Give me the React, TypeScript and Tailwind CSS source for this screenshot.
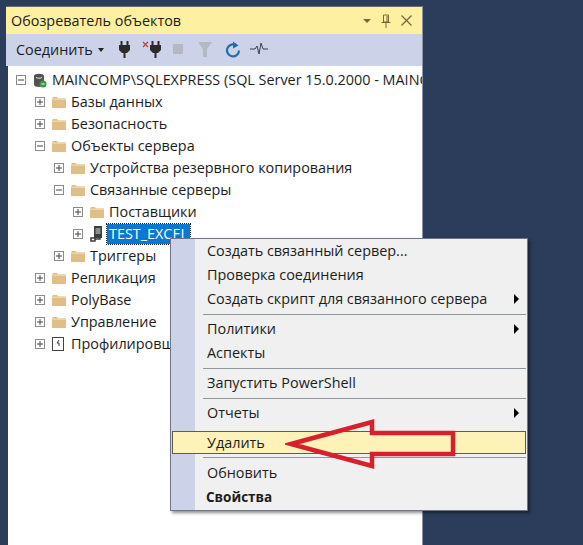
import React from 'react';

type Kind = 'server' | 'folder' | 'linked' | 'profiler';

interface TreeRow {
  level: number;
  open: boolean;
  kind: Kind;
  label: string;
  selected?: boolean;
}

const rows: TreeRow[] = [
  { level: 0, open: true, kind: 'server', label: 'MAINCOMP\\SQLEXPRESS (SQL Server 15.0.2000 - MAINCOMP\\User)' },
  { level: 1, open: false, kind: 'folder', label: 'Базы данных' },
  { level: 1, open: false, kind: 'folder', label: 'Безопасность' },
  { level: 1, open: true, kind: 'folder', label: 'Объекты сервера' },
  { level: 2, open: false, kind: 'folder', label: 'Устройства резервного копирования' },
  { level: 2, open: true, kind: 'folder', label: 'Связанные серверы' },
  { level: 3, open: false, kind: 'folder', label: 'Поставщики' },
  { level: 3, open: false, kind: 'linked', label: 'TEST_EXCEL', selected: true },
  { level: 2, open: false, kind: 'folder', label: 'Триггеры' },
  { level: 1, open: false, kind: 'folder', label: 'Репликация' },
  { level: 1, open: false, kind: 'folder', label: 'PolyBase' },
  { level: 1, open: false, kind: 'folder', label: 'Управление' },
  { level: 1, open: false, kind: 'profiler', label: 'Профилировщик XEvent' },
];

const indents = ['pl-2', 'pl-[27px]', 'pl-[46px]', 'pl-[65px]'];

const Expander: React.FC<{ open: boolean }> = ({ open }) => (
  <svg width="10" height="10" viewBox="0 0 10 10" className="shrink-0">
    <rect x="0.5" y="0.5" width="9" height="9" fill="#fff" stroke="#8a8a8a" />
    <path d={open ? 'M2 5h6' : 'M2 5h6M5 2v6'} stroke="#444" fill="none" />
  </svg>
);

const TreeIcon: React.FC<{ kind: Kind }> = ({ kind }) => {
  if (kind === 'server') {
    return (
      <svg width="14" height="15" viewBox="0 0 14 15" className="shrink-0">
        <path d="M1 3c0-3 10-3 10 0v9c0 2.500-10 2.500-10 0z" fill="#55514c" />
        <path d="M3 4.500c2 1 4 1 6 0" stroke="#e8e8e8" fill="none" />
        <circle cx="10" cy="11" r="3.500" fill="#2f9e44" />
        <path d="M8.500 11h3" stroke="#fff" />
      </svg>
    );
  }
  if (kind === 'linked') {
    return (
      <svg width="13" height="16" viewBox="0 0 13 16" className="shrink-0">
        <rect x="4" y="0" width="8" height="12" fill="#3d3d3d" />
        <path d="M5.500 3h5M5.500 5h5M5.500 7h5" stroke="#ddd" />
        <path d="M1 12h4v3H1zM5 13h5v-2" stroke="#3d3d3d" strokeWidth="1.500" fill="none" />
      </svg>
    );
  }
  if (kind === 'profiler') {
    return (
      <svg width="13" height="15" viewBox="0 0 13 15" className="shrink-0">
        <rect x="0.500" y="0.500" width="11" height="13" fill="#fff" stroke="#444" />
        <path d="M7 3L5 6l2 0v3" stroke="#333" fill="none" />
      </svg>
    );
  }
  return (
    <svg width="14" height="12" viewBox="0 0 14 12" className="shrink-0">
      <path d="M0 2.500L1 1h4l1 1.500h8V12H0z" fill="#dfbe87" />
      <path d="M0 2.500h14V4H0z" fill="#ecd5ab" />
    </svg>
  );
};

const Separator = () => <div className="ml-[32px] mr-px mt-[3px] mb-0.5 h-px bg-[#8f95a3]" />;

const MenuItem: React.FC<{ label: string; arrow?: boolean; bold?: boolean }> = ({ label, arrow, bold }) => (
  <div className={`flex items-center justify-between h-6 pl-[36px] pr-2 ${bold ? 'font-bold text-[13.5px] -ml-px' : ''}`}>
    <span>{label}</span>
    {arrow && <span className="border-y-[5px] border-l-[5px] border-y-transparent border-l-black" />}
  </div>
);

export default function App() {
  return (
    <div className="relative w-[583px] h-[545px] overflow-hidden bg-[#2c3d5b] pl-1.5 pt-1.5 font-['Open_Sans','Noto_Sans',sans-serif] text-[14.4px] text-[#1c1c1c]">
      <div className="flex flex-col w-[417px] h-[539px] border-r border-[#8d93ab]">
        {/* title */}
        <div className="flex items-center justify-between h-[28px] bg-[#fdf0a0] pl-[5px] pr-2.5 shrink-0 border-t border-[#6d6d6d]">
          <span>Обозреватель объектов</span>
          <div className="flex items-center gap-[10px]">
            <span className="border-x-[4px] border-t-[4px] border-x-transparent border-t-[#77683a]" />
            <svg width="10" height="14" viewBox="0 0 10 14">
              <path d="M2.500 1h5v7h-5zM0.500 8.500h9M5 8.500V14M6 2v6" stroke="#77683a" fill="none" />
            </svg>
            <svg width="11" height="11" viewBox="0 0 11 11">
              <path d="M0.500 0.500l10 10M10.500 0.500l-10 10" stroke="#77683a" strokeWidth="1.300" fill="none" />
            </svg>
          </div>
        </div>

        {/* toolbar */}
        <div className="flex items-center h-[32px] bg-[#ccd3e8] pl-2.5 shrink-0">
          <span>Соединить</span>
          <span className="ml-[5px] border-x-[3.5px] border-t-[4px] border-x-transparent border-t-[#222]" />
          <div className="flex items-center ml-[15px] -mt-0.5">
            <svg width="11" height="17" viewBox="0 0 11 17">
              <path d="M2.500 0v4M8.500 0v4" stroke="#2b2b2b" strokeWidth="2" />
              <path d="M0 4h11v5l-3 3H3L0 9zM4.500 12h2v5h-2z" fill="#2b2b2b" />
            </svg>
            <svg width="19" height="17" viewBox="0 0 19 17" className="ml-[12px]">
              <path d="M1 1l5 5M6 1L1 6" stroke="#d0392b" strokeWidth="1.200" />
              <path d="M10.500 0v4M16.500 0v4" stroke="#2b2b2b" strokeWidth="2" />
              <path d="M8 4h11v5l-3 3h-5L8 9zM12.500 12h2v5h-2z" fill="#2b2b2b" />
            </svg>
            <span className="ml-[12px] size-[10px] bg-[#b5b8c3]" />
            <svg width="14" height="15" viewBox="0 0 14 15" className="ml-[15px]">
              <path d="M0 0h14L9 7v8H5V7z" fill="#b5b8c3" />
            </svg>
            <svg width="16" height="17" viewBox="0 0 16 17" className="ml-[13px]">
              <path d="M11.500 4.500a6 6 0 1 0 2.500 5" stroke="#1f6fb0" strokeWidth="2.200" fill="none" />
              <path d="M8 0.500l5.500 4-5.500 3z" fill="#1f6fb0" />
            </svg>
            <svg width="18" height="12" viewBox="0 0 18 12" className="ml-[9px]">
              <path d="M0 6h5l2-3 2 8 2-11 2 6h5" stroke="#3a3f4a" fill="none" />
            </svg>
          </div>
        </div>

        {/* tree */}
        <div className="flex-1 bg-white ml-0.5 pt-[3px] overflow-hidden">
          {rows.map((row) => (
            <div key={row.label} className={`flex items-center h-[22px] whitespace-nowrap ${indents[row.level]}`}>
              <Expander open={row.open} />
              <span className="flex w-[14px] ml-[7px] shrink-0">
                <TreeIcon kind={row.kind} />
              </span>
              <span
                className={
                  row.selected
                    ? 'ml-[3px] px-0.5 h-5 leading-5 bg-[#0a78d1] text-white outline outline-dotted outline-[#123]'
                    : 'ml-[5px]'
                }
              >
                {row.label}
              </span>
            </div>
          ))}
        </div>
      </div>

      {/* context menu */}
      <div className="absolute left-[170px] top-[238px] w-[358px] h-[273px] bg-[#f0f0f0] border border-[#6f7686] shadow-[2px_2px_3px_rgba(0,0,0,0.45)]">
        <div className="absolute left-0 top-0 bottom-0 w-[24px] bg-[#ccd3e8]" />
        <div className="relative">
          <MenuItem label="Создать связанный сервер..." />
          <MenuItem label="Проверка соединения" />
          <MenuItem label="Создать скрипт для связанного сервера" arrow />
          <Separator />
          <MenuItem label="Политики" arrow />
          <MenuItem label="Аспекты" />
          <Separator />
          <MenuItem label="Запустить PowerShell" />
          <Separator />
          <MenuItem label="Отчеты" arrow />
          <div className="flex items-center h-[23px] mt-1.5 ml-px mr-px pl-[34px] bg-[#fdf2b8] border border-[#5d5d4a]">
            Удалить
          </div>
          <Separator />
          <div className="pt-px">
            <MenuItem label="Обновить" />
            <MenuItem label="Свойства" bold />
          </div>
        </div>
      </div>

      {/* red arrow */}
      <svg width="175" height="55" viewBox="0 0 175 55" className="absolute left-[285px] top-[417px]">
        <path
          d="M6 27L87 5V16H168V37H87V49z"
          fill="none"
          stroke="#d7202c"
          strokeWidth="4.500"
          strokeLinejoin="miter"
        />
      </svg>
    </div>
  );
}
